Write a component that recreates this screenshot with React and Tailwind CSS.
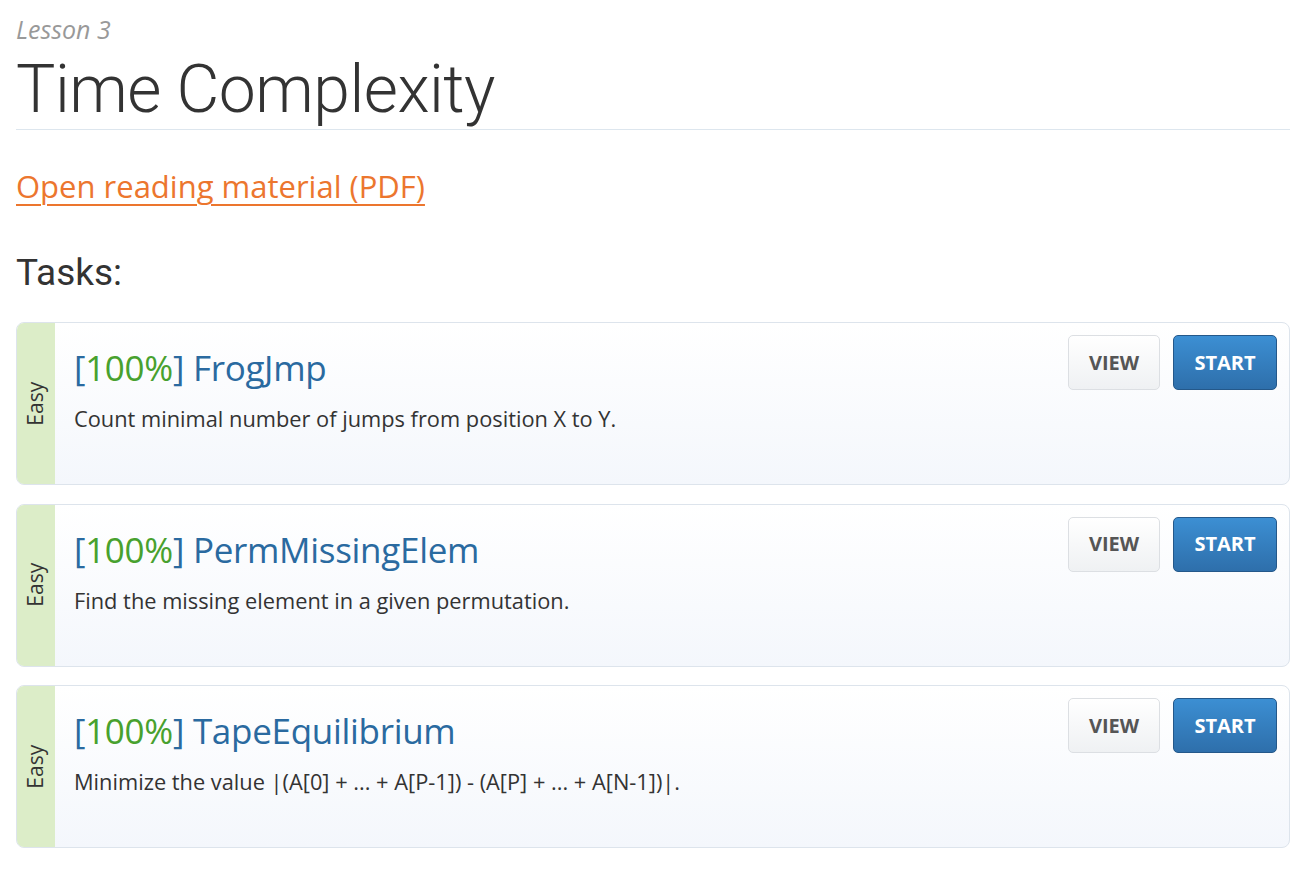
import React from "react";

const tasks = [
  { name: "FrogJmp", desc: "Count minimal number of jumps from position X to Y." },
  { name: "PermMissingElem", desc: "Find the missing element in a given permutation." },
  {
    name: "TapeEquilibrium",
    desc: "Minimize the value |(A[0] + ... + A[P-1]) - (A[P] + ... + A[N-1])|.",
  },
];

function TaskCard({ task }) {
  return (
    <div className="flex h-[163px] rounded-[8px] border border-[#dde4ec] bg-gradient-to-b from-white to-[#f4f7fc] overflow-hidden">
      {/* difficulty strip */}
      <div className="w-[38px] shrink-0 bg-[#dcedc8] flex items-center justify-center">
        <span className="-rotate-90 text-[21px] text-[#333] whitespace-nowrap font-['Open_Sans',sans-serif]">
          Easy
        </span>
      </div>
      <div className="flex-1 flex justify-between pl-[19px] pr-[12px] pt-[12px]">
        <div>
          <div className="mt-[11px] text-[35px] leading-[44px] text-[#2a6aa0] font-['Open_Sans',sans-serif] tracking-[-0.3px]">
            [<span className="text-[#48a12e]">100%</span>] {task.name}
          </div>
          <p className="mt-[14px] text-[21.8px] leading-[30px] text-[#333] font-['Open_Sans',sans-serif]">
            {task.desc}
          </p>
        </div>
        <div className="flex gap-[13px] items-start">
          <button className="w-[92px] h-[55px] rounded-[5px] border border-[#dcdfe3] bg-gradient-to-b from-white to-[#eff1f3] text-[#555] font-bold text-[20px] font-['Open_Sans',sans-serif]">
            VIEW
          </button>
          <button className="w-[104px] h-[55px] rounded-[5px] border border-[#24588a] bg-gradient-to-b from-[#3c8fd3] to-[#2e6fab] text-white font-bold text-[20px] font-['Open_Sans',sans-serif]">
            START
          </button>
        </div>
      </div>
    </div>
  );
}

export default function App() {
  return (
    <div className="min-h-screen bg-white pl-[16px] pr-[20px] pt-[14px]">
      <div className="text-[25px] italic text-[#999] font-['Open_Sans',sans-serif] leading-[30px]">Lesson 3</div>
      <h1 className="mt-[8px] text-[66px] font-light text-[#333] leading-[76px] tracking-[-0.5px] font-['Roboto',sans-serif] pb-[1px] border-b border-[#dde6ee]">
        Time Complexity
      </h1>
      <a
        href="#"
        className="block w-fit mt-[36px] text-[31px] leading-[40px] text-[#ec762e] underline underline-offset-[6px] decoration-[2px] font-['Open_Sans',sans-serif]"
      >
        Open reading material (PDF)
      </a>
      <h2 className="mt-[45px] text-[37px] leading-[44px] text-[#333] font-['Roboto',sans-serif]">Tasks:</h2>
      <div className="mt-[27px] flex flex-col gap-[18.5px]">
        {tasks.map((t) => (
          <TaskCard key={t.name} task={t} />
        ))}
      </div>
    </div>
  );
}
